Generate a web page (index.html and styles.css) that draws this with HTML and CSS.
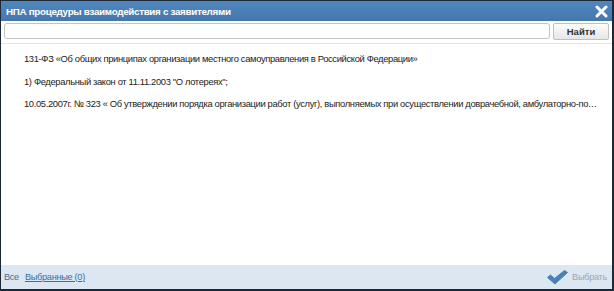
FILE: index.html
```
<!DOCTYPE html>
<html>
<head>
<meta charset="utf-8">
<link rel="stylesheet" href="styles.css">
</head>
<body>
<div class="window">
  <div class="titlebar">
    <span class="title">НПА процедуры взаимодействия с заявителями</span>
    <svg class="close" width="13" height="13" viewBox="0 0 13 13"><path d="M2 2 L11 11 M11 2 L2 11" stroke="#fff" stroke-width="3" stroke-linecap="round"/></svg>
  </div>
  <div class="search">
    <input class="search-input" type="text">
    <button class="search-btn">Найти</button>
  </div>
  <div class="list">
    <div class="item">131-ФЗ «Об общих принципах организации местного самоуправления в Российской Федерации»</div>
    <div class="item">1) Федеральный закон от 11.11.2003 "О лотереях";</div>
    <div class="item">10.05.2007г. № 323 « Об утверждении порядка организации работ (услуг), выполняемых при осуществлении доврачебной, амбулаторно-поликлинической (в том числе первичной медико-санитарной помощи)»</div>
  </div>
  <div class="footer">
    <div class="tabs">
      <span class="tab">Все</span>
      <a class="tab link">Выбранные (0)</a>
    </div>
    <div class="choose">
      <svg class="check" width="21" height="15" viewBox="0 0 21 15"><path d="M0.5 7.5 L3.5 5 L7.5 8.5 L17.5 0.5 L20.5 2.5 L8 14 Z" fill="#4a80b4" stroke="#4a80b4" stroke-width="1" stroke-linejoin="round"/></svg>
      <span class="choose-text">Выбрать</span>
    </div>
  </div>
</div>
</body>
</html>
```
FILE: styles.css
```
* { box-sizing: border-box; }
html, body { margin: 0; padding: 0; }
body { width: 614px; height: 291px; background: #fff; font-family: "Liberation Sans", Arial, sans-serif; }
.window {
  width: 614px; height: 291px;
  border: 1px solid #1d2836;
  border-width: 1px 2px 2px 1px;
  display: flex; flex-direction: column;
  background: #fff;
}
.titlebar {
  height: 20px; flex: none;
  background: linear-gradient(#5187be, #4577ac);
  display: flex; align-items: center; justify-content: space-between;
  padding: 0 4px 0 5px;
}
.title { color: #fff; font-weight: bold; font-size: 9.8px; letter-spacing: -0.3px; }
.close { display: block; }
.search {
  display: flex; gap: 3px; padding: 2px 3px 3px 3px;
  border-bottom: 1px solid #e4e4e4;
  flex: none;
}
.search-input {
  flex: 1; height: 16px; border: 1px solid #c4c4c4; border-radius: 3px;
  margin: 0; padding: 0 4px;
}
.search-btn {
  width: 56px; height: 17px; margin: 0; padding: 0;
  border: 1px solid #c0c0c0; border-radius: 2px;
  background: linear-gradient(#fdfdfd, #e6e6e6);
  font-family: "Liberation Sans", sans-serif; font-size: 9.5px; font-weight: bold; color: #333;
}
.list { flex: 1; padding: 9px 12px 0 23px; }
.item {
  font-size: 9.4px; color: #222; line-height: 12px;
  white-space: nowrap; overflow: hidden; text-overflow: ellipsis;
  margin-bottom: 10.5px; letter-spacing: -0.35px;
}
.footer {
  height: 24px; flex: none;
  background: #dde7f1;
  display: flex; align-items: center; justify-content: space-between;
  padding: 0 5px 0 3px;
}
.tabs { display: flex; gap: 6px; font-size: 9.2px; letter-spacing: -0.3px; }
.tab { color: #4a6c92; }
.link { color: #3a6ea8; text-decoration: underline; }
.choose { display: flex; align-items: center; gap: 4px; }
.check { display: block; margin-top: 1px; }
.choose-text { font-size: 9.2px; color: #9aa8b8; letter-spacing: -0.3px; }
```
